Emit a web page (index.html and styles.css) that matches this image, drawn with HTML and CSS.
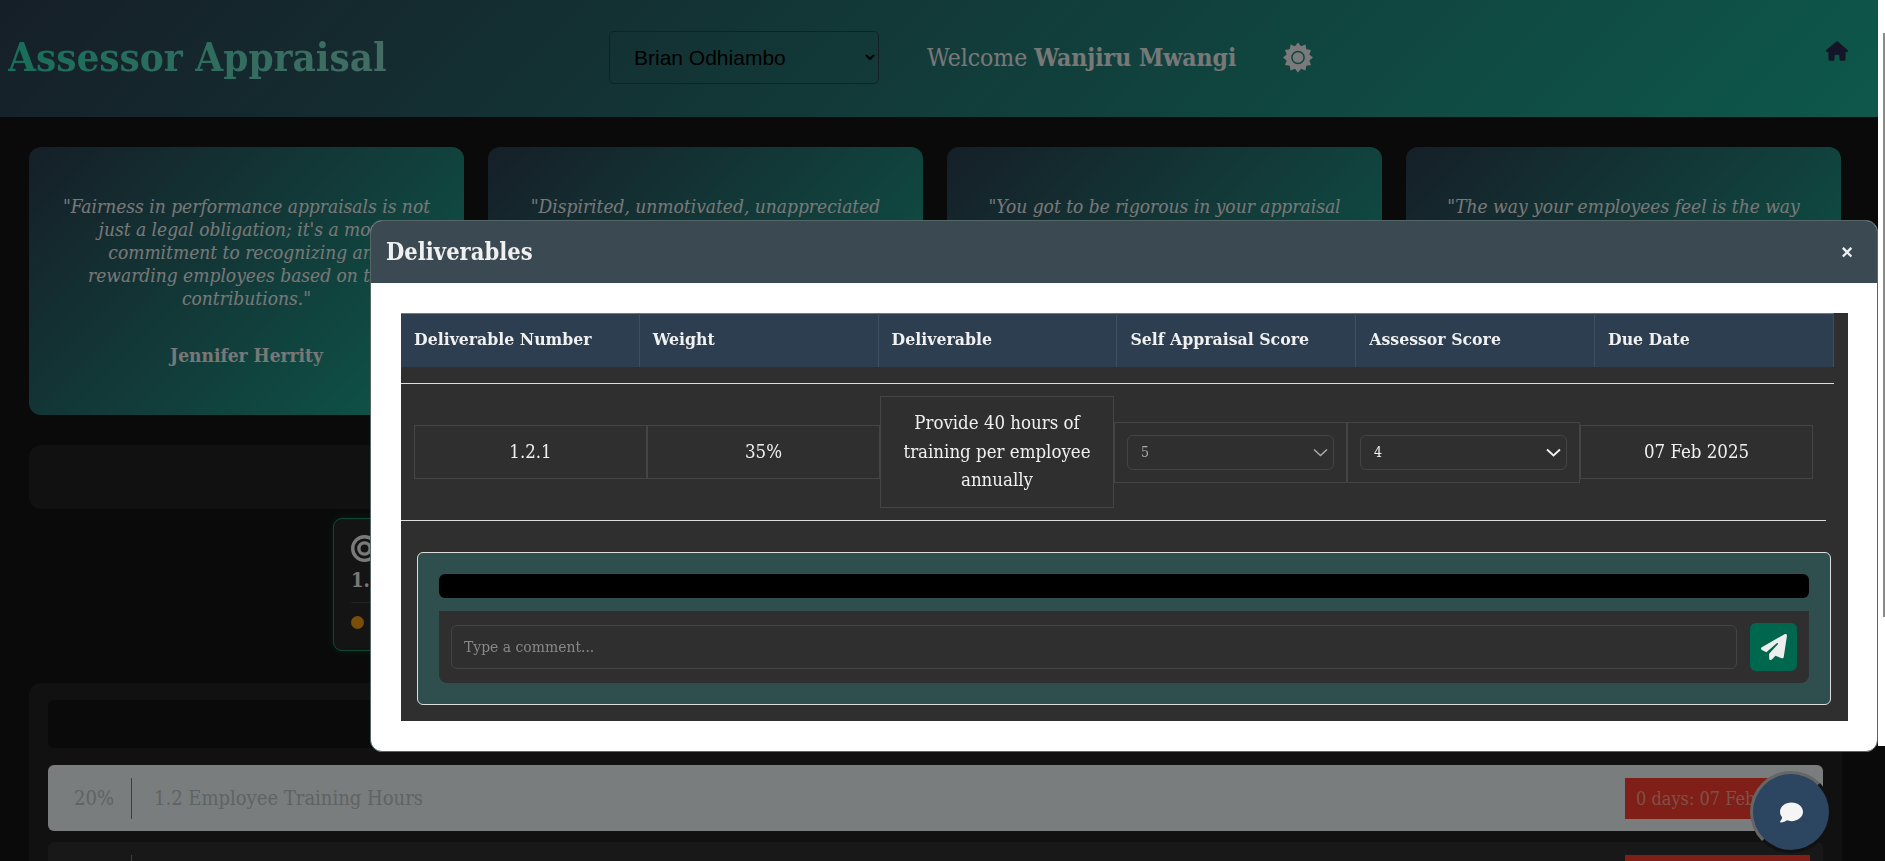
FILE: index.html
```html
<!DOCTYPE html>
<html lang="en">
<head>
<meta charset="UTF-8" />
<title>Assessor Appraisal</title>
<link rel="stylesheet" href="styles.css">
</head>
<body>

<div class="page">
  <header class="topbar">
    <h1 class="brand">Assessor Appraisal</h1>
    <select class="staff-select"><option>Brian Odhiambo</option></select>
    <div class="welcome">Welcome <strong>Wanjiru Mwangi</strong></div>
    <svg class="sun" viewBox="0 0 32 32">
      <polygon points="32,16 28.07,19.24 29.86,24 24.84,24.84 24,29.86 19.24,28.07 16,32 12.76,28.07 8,29.86 7.16,24.84 2.14,24 3.93,19.24 0,16 3.93,12.76 2.14,8 7.16,7.16 8,2.14 12.76,3.93 16,0 19.24,3.93 24,2.14 24.84,7.16 29.86,8 28.07,12.76"/>
      <circle class="sun-ring" cx="16" cy="16" r="6.500"/>
    </svg>
    <svg class="home" viewBox="0 0 576 512"><path d="M575.800 255.500c0 18-15 32.100-32 32.100h-32l.7 160.200c0 2.700-.2 5.400-.5 8.100V472c0 22.100-17.900 40-40 40H456c-1.100 0-2.200 0-3.300-.1c-1.400 .1-2.800 .1-4.200 .1H416 392c-22.100 0-40-17.900-40-40V448 384c0-17.700-14.300-32-32-32H256c-17.700 0-32 14.300-32 32v64 24c0 22.100-17.900 40-40 40H160 128.100c-1.500 0-3-.1-4.500-.2c-1.200 .1-2.400 .2-3.600 .2H104c-22.100 0-40-17.900-40-40V360c0-.9 0-1.900 .1-2.800V287.600H32c-18 0-32-14-32-32.100c0-9 3-17 10-24L266.400 8c7-7 15-8 22-8s15 2 21 7L564.800 231.500c8 7 12 15 11 24z"/></svg>
  </header>

  <section class="quotes">
    <div class="quote">
      <p>"Fairness in performance appraisals is not just a legal obligation; it's a moral commitment to recognizing and<br>rewarding employees based on their contributions."</p>
      <b>Jennifer Herrity</b>
    </div>
    <div class="quote">
      <p>"Dispirited, unmotivated, unappreciated workers cannot compete in a highly competitive world."</p>
      <b>Francis Hesselbein</b>
    </div>
    <div class="quote">
      <p>"You got to be rigorous in your appraisal of your people and your team."</p>
      <b>Jack Welch</b>
    </div>
    <div class="quote">
      <p>"The way your employees feel is the way your customers will feel."</p>
      <b>Sybil Stershic</b>
    </div>
  </section>

  <div class="band"></div>

  <div class="goal-row">
    <div class="goal-card">
      <svg class="target" viewBox="0 0 24 24"><path fill-rule="evenodd" d="M12 0a12 12 0 1 1 0 24 12 12 0 0 1 0-24zm0 3a9 9 0 1 0 0 18 9 9 0 0 0 0-18zm0 2.500a6.500 6.500 0 1 1 0 13 6.500 6.500 0 0 1 0-13zm0 3a3.500 3.500 0 1 0 0 7 3.500 3.500 0 0 0 0-7z"/></svg>
      <div class="goal-title">1. Learning</div>
      <div class="goal-rule"></div>
      <div class="goal-status"><span class="dot"></span> Pending</div>
    </div>
  </div>

  <section class="kpi-panel">
    <div class="kpi-head"></div>
    <div class="kpi-row open">
      <span class="kpi-weight">20%</span>
      <span class="kpi-name">1.2 Employee Training Hours</span>
      <span class="kpi-due">0 days: 07 Feb 2025</span>
    </div>
    <div class="kpi-row">
      <span class="kpi-weight"></span>
      <span class="kpi-name"></span>
      <span class="kpi-due"></span>
    </div>
  </section>
</div>

<div class="overlay"></div>

<div class="scrollbar"><div class="scrollbar-thumb"></div></div>

<div class="modal">
  <div class="modal-header">
    <h2>Deliverables</h2>
    <span class="modal-close">×</span>
  </div>
  <div class="modal-body">
    <div class="sheet">
      <div class="sheet-head">
        <div>Deliverable Number</div>
        <div>Weight</div>
        <div>Deliverable</div>
        <div>Self Appraisal Score</div>
        <div>Assessor Score</div>
        <div>Due Date</div>
      </div>
      <div class="sheet-rule"></div>
      <div class="sheet-row">
        <div class="cell">1.2.1</div>
        <div class="cell">35%</div>
        <div class="cell">Provide 40 hours of training per employee annually</div>
        <div class="cell cell-select">
          <div class="fake-select muted">5 <svg viewBox="0 0 15 9"><path d="M1 1.500l6.500 6 6.500-6" fill="none" stroke="currentColor" stroke-width="1.500"/></svg></div>
        </div>
        <div class="cell cell-select">
          <div class="fake-select">4 <svg viewBox="0 0 15 9"><path d="M1 1.500l6.500 6 6.500-6" fill="none" stroke="currentColor" stroke-width="1.800"/></svg></div>
        </div>
        <div class="cell">07 Feb 2025</div>
      </div>
      <div class="comments">
        <div class="comment-log"></div>
        <div class="comment-form">
          <div class="comment-input">Type a comment...</div>
          <button class="send" type="button">
            <svg viewBox="0 0 512 512"><path fill="currentColor" d="M498.100 5.600c10.100 7 15.400 19.100 13.500 31.200l-64 416c-1.500 9.700-7.400 18.200-16 23s-18.900 5.400-28 1.600L284 427.700l-68.500 74.100c-8.900 9.700-22.900 12.900-35.200 8.100S160 493.200 160 480V396.400c0-4 1.500-7.800 4.200-10.700L331.800 202.800c5.800-6.300 5.600-16-.4-22s-15.700-6.400-22-.7L106 360.800 17.700 316.600C7.100 311.300 .3 300.700 0 288.900s5.900-22.800 16.100-28.700l448-256c10.700-6.100 23.900-5.500 34 1.400z"/></svg>
          </button>
        </div>
      </div>
    </div>
  </div>
</div>

<button class="chat-fab" type="button">
  <svg viewBox="0 0 512 512"><path fill="currentColor" d="M512 240c0 114.900-114.600 208-256 208c-37.100 0-72.300-6.400-104.100-17.900c-11.900 8.700-31.300 20.600-54.300 30.600C73.600 471.100 44.700 480 16 480c-6.500 0-12.300-3.900-14.800-9.900c-2.500-6-1.100-12.800 3.400-17.400c.3-.3 .7-.7 1.300-1.400c1.100-1.200 2.800-3.100 4.900-5.700c4.100-5 9.600-12.400 15.200-21.600c10-16.600 19.500-38.400 21.400-62.900C17.700 326.800 0 285.100 0 240C0 125.100 114.600 32 256 32s256 93.100 256 208z"/></svg>
</button>

</body>
</html>
```

FILE: styles.css
```css
* {
  box-sizing: border-box;
}
html, body {
  height: 100%;
  overflow: hidden;
}
body {
  margin: 0;
  background: #141414;
  font-family: "DejaVu Serif", "Liberation Serif", serif;
  font-stretch: condensed;
  color: #f0f0f0;
}
.page {
  width: 1878px;
}
.topbar {
  height: 117px;
  display: flex;
  align-items: center;
  padding-bottom: 3px;
  background: linear-gradient(135deg, #2c3e50, #1cb096);
}
.brand {
  margin: 0 0 2px 8px;
  width: 601px;
  font-size: 40px;
  font-weight: 700;
  background: linear-gradient(90deg, #30dcb4, #bcd8d4);
  -webkit-background-clip: text;
  background-clip: text;
  color: transparent;
  white-space: nowrap;
}
.staff-select {
  width: 270px;
  height: 53px;
  padding-left: 20px;
  font: 21px "Liberation Sans", sans-serif;
  background: transparent;
  color: #000;
  border: 1px solid #2c3e50;
  border-radius: 5px;
}
.welcome {
  margin-left: 48px;
  width: 356px;
  font-size: 24.500px;
  white-space: nowrap;
}
.sun {
  width: 30px;
  height: 31px;
  fill: #f4f4f4;
}
.sun-ring {
  fill: none;
  stroke: #1c8a78;
  stroke-width: 1.600;
}
.home {
  align-self: flex-start;
  margin-left: 513px;
  margin-top: 41px;
  width: 22px;
  height: 20px;
  fill: #2a2a52;
}
.quotes {
  display: grid;
  grid-template-columns: repeat(4, 1fr);
  gap: 24px;
  padding: 30px 37px 0 29px;
}
.quote {
  height: 268px;
  padding: 48px 32px 0;
  border-radius: 12px;
  background: linear-gradient(135deg, #2c3e50, #1cb096);
  text-align: center;
}
.quote p {
  margin: 0 0 34px;
  font-size: 19px;
  line-height: 23px;
  font-style: italic;
}
.quote b {
  font-size: 19px;
}
.band {
  height: 64px;
  margin: 30px 55px 0 29px;
  border-radius: 12px;
  background: #222;
}
.goal-row {
  padding: 9px 0 0 333px;
  height: 174px;
}
.goal-card {
  width: 300px;
  height: 133px;
  padding: 16px 17px 0;
  border: 1px solid #1a936f;
  border-radius: 9px;
  background: #282828;
  box-shadow: 0 0 8px rgba(26, 147, 111, 0.3);
}
.target {
  width: 27px;
  height: 27px;
  fill: #f4f4f4;
  display: block;
}
.goal-title {
  margin-top: 4px;
  height: 28px;
  line-height: 28px;
  font-size: 20px;
  font-weight: 700;
}
.goal-rule {
  height: 1px;
  margin: 8px 0 9px;
  background: #444;
}
.goal-status {
  display: flex;
  align-items: center;
  gap: 8px;
  height: 20px;
  font-size: 16px;
}
.dot {
  width: 13px;
  height: 13px;
  border-radius: 50%;
  background: #f39c12;
}
.kpi-panel {
  margin: 0 36px 0 29px;
  padding: 17px 19px;
  border-radius: 12px 12px 0 0;
  background: #222;
}
.kpi-head {
  height: 48px;
  margin-bottom: 17px;
  border-radius: 6px;
  background: #141414;
}
.kpi-row {
  height: 66px;
  margin-bottom: 11px;
  display: flex;
  align-items: center;
  padding-right: 13px;
  border-radius: 6px;
  background: #303030;
}
.kpi-row.open {
  background: #f4fafd;
  color: #bcc8c8;
}
.kpi-weight {
  width: 84px;
  height: 41px;
  line-height: 41px;
  padding-left: 26px;
  font-size: 20px;
  border-right: 1px solid #14b080;
  margin-right: 22px;
}
.kpi-name {
  flex: 1;
  font-size: 20px;
}
.kpi-due {
  width: 185px;
  height: 41px;
  line-height: 41px;
  padding-left: 11px;
  font-size: 18px;
  background: #ff3f30;
  color: #ffa090;
  white-space: nowrap;
  overflow: hidden;
}
.overlay {
  position: fixed;
  inset: 0;
  background: rgba(0, 0, 0, 0.5);
}
.modal {
  position: fixed;
  left: 370px;
  top: 220px;
  width: 1508px;
  height: 532px;
  border-radius: 12px;
  overflow: hidden;
  background: #fff;
  border: 1px solid #566;
}
.modal-header {
  height: 62px;
  display: flex;
  align-items: center;
  justify-content: space-between;
  padding: 0 24px 0 15px;
  background: #3b4a52;
}
.modal-header h2 {
  margin: 0;
  font-size: 23.500px;
  font-weight: 700;
}
.modal-close {
  font-size: 20px;
  font-weight: 700;
  font-family: "Liberation Sans", sans-serif;
}
.modal-body {
  padding: 30px 29px 30px 30px;
}
.sheet {
  height: 408px;
  background: #2f2f2f;
  display: flow-root;
}
.sheet-head {
  display: grid;
  grid-template-columns: repeat(6, 238.800px);
  height: 54px;
  font-weight: 700;
  font-size: 17.500px;
}
.sheet-head div {
  padding: 0 12px 3px 13px;
  display: flex;
  align-items: center;
  background: #2c3e50;
  border-top: 1px solid #777;
  border-right: 1px solid #3f4f5f;
}
.sheet-rule {
  width: 1433px;
  height: 1px;
  margin-top: 16px;
  background: #ddd;
}
.sheet-row {
  width: 1425px;
  height: 137px;
  margin-bottom: 31px;
  display: grid;
  grid-template-columns: 233px 233px 234px 233px 233px 233px;
  align-items: center;
  padding-left: 13px;
  border-bottom: 1px solid #ddd;
}
.cell {
  min-height: 54px;
  display: flex;
  align-items: center;
  justify-content: center;
  text-align: center;
  padding: 12px;
  border: 1px solid #454545;
  font-size: 18.500px;
  line-height: 28.500px;
}
.cell-select {
  padding: 12px;
}
.fake-select {
  width: 100%;
  height: 35px;
  display: flex;
  align-items: center;
  justify-content: space-between;
  padding: 0 5px 0 13px;
  border: 1px solid #444;
  border-radius: 6px;
  font-size: 14px;
}
.fake-select.muted {
  color: #aaa;
}
.fake-select svg {
  width: 15px;
  height: 9px;
}
.comments {
  margin: 0 17px 0 16px;
  height: 153px;
  padding: 21px;
  background: #2f4f4f;
  border: 1px solid #ddd;
  border-radius: 6px;
}
.comment-log {
  height: 24px;
  background: #000;
  border-radius: 6px;
  margin-bottom: 13px;
}
.comment-form {
  height: 72px;
  display: flex;
  align-items: center;
  gap: 13px;
  padding: 0 12px;
  background: #2f2f2f;
  border-radius: 0 0 8px 8px;
}
.comment-input {
  flex: 1;
  height: 44px;
  display: flex;
  align-items: center;
  padding: 0 12px;
  border: 1px solid #444;
  border-radius: 6px;
  font-size: 15.500px;
  color: #888;
}
.send {
  width: 47px;
  height: 48px;
  display: flex;
  align-items: center;
  justify-content: center;
  padding: 0;
  border: none;
  border-radius: 6px;
  background: #00674f;
  color: #eee;
}
.send svg {
  width: 26px;
  height: 26px;
}
.chat-fab {
  position: fixed;
  left: 1750px;
  top: 771px;
  width: 82px;
  height: 82px;
  display: flex;
  align-items: center;
  justify-content: center;
  padding: 0;
  border: 3px solid #111;
  border-top-color: #666;
  border-left-color: #666;
  border-radius: 50%;
  background: #2c4560;
  color: #f5f5f5;
}
.chat-fab svg {
  width: 23px;
  height: 23px;
}
.scrollbar {
  position: fixed;
  left: 1878px;
  top: 0;
  width: 7px;
  height: 746px;
  padding-top: 33px;
  background: #fff;
}
.scrollbar-thumb {
  height: 584px;
  margin-left: 5px;
  background: #8a8a8a;
}
```
